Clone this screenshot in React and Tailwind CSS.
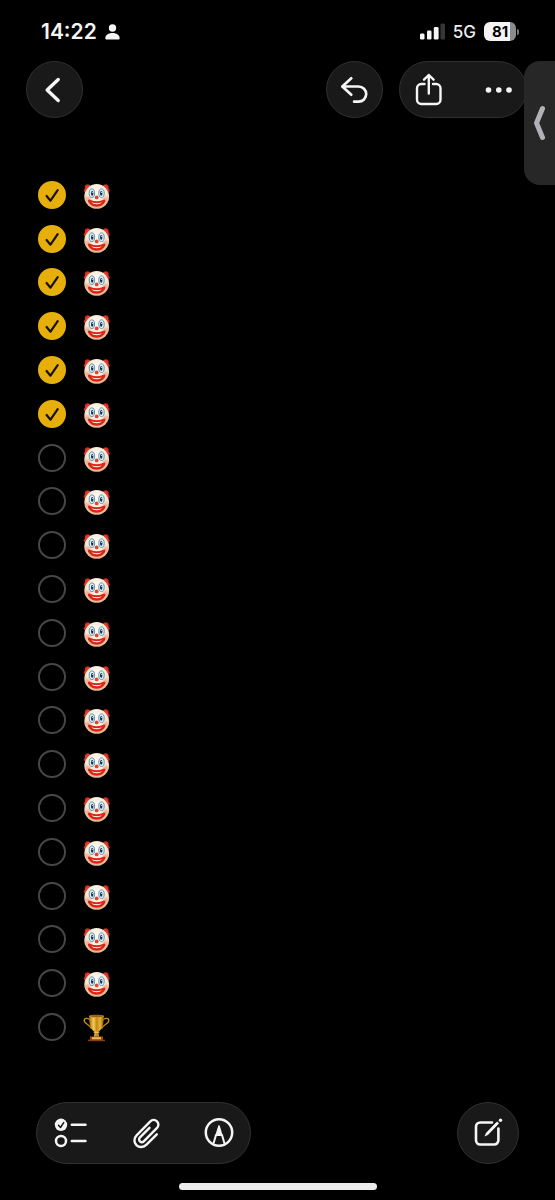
import { useState } from "react";

const initialItems = Array.from({ length: 20 }, (_, index) => ({
  id: index + 1,
  kind: index === 19 ? "trophy" : "clown",
  done: index < 6
}));

const Clown = () => (
  <svg viewBox="0 0 28 28" className="size-7" role="img" aria-label="Clown face">
    <defs>
      <radialGradient id="clown-skin" cx="50%" cy="35%" r="65%">
        <stop offset="0%" stopColor="#fffdf8" />
        <stop offset="60%" stopColor="#f9ead6" />
        <stop offset="100%" stopColor="#deb083" />
      </radialGradient>
      <radialGradient id="clown-cheek">
        <stop offset="0%" stopColor="#f58a70" stopOpacity="0.7" />
        <stop offset="100%" stopColor="#f58a70" stopOpacity="0" />
      </radialGradient>
    </defs>
    <g fill="#c9261a">
      <circle cx="4.6" cy="5" r="2.8" />
      <circle cx="2.7" cy="8.4" r="2" />
      <circle cx="22.8" cy="5" r="2.8" />
      <circle cx="24.7" cy="8.4" r="2" />
    </g>
    <circle cx="13.7" cy="14.4" r="12.4" fill="url(#clown-skin)" />
    <path d="M2.4 9.8c.8-2.8 2.5-4.9 5-6.4L5 3 2 6zM25 9.8c-.8-2.8-2.5-4.9-5-6.4l2.400-.4 3 3z" fill="#e7402d" />
    <circle cx="5" cy="17" r="4" fill="url(#clown-cheek)" />
    <circle cx="22.4" cy="17" r="4" fill="url(#clown-cheek)" />
    <g fill="#e3f1f6" stroke="#5795b5" strokeWidth="1">
      <ellipse cx="8.9" cy="11.2" rx="2.7" ry="4.3" />
      <ellipse cx="18.5" cy="11.2" rx="2.7" ry="4.3" />
    </g>
    <ellipse cx="9.2" cy="11.4" rx="1.2" ry="2.4" fill="#1c3147" />
    <ellipse cx="18.2" cy="11.4" rx="1.2" ry="2.4" fill="#1c3147" />
    <circle cx="9.4" cy="10.4" r="0.5" fill="#fff" />
    <circle cx="18.4" cy="10.4" r="0.5" fill="#fff" />
    <circle cx="13.7" cy="15.4" r="1.9" fill="#e2452f" />
    <path d="M5.3 17.8q1.2-.9 2.3.2 6.1 2.600 12.200 0 1.100-1.100 2.300-.2c.8.8.2 2.400-.8 3.500-3.600 4.700-11.600 4.700-15.200 0-1-1.100-1.600-2.700-.8-3.500z" fill="#dc2418" />
    <path d="M8.400 20.300q5.300 1.800 10.600 0-1.500 2-5.300 2t-5.300-2z" fill="#fff" />
  </svg>
);

const Trophy = () => (
  <svg viewBox="0 0 28 28" className="size-7" role="img" aria-label="Trophy">
    <defs>
      <linearGradient id="trophy-gold" x1="0" x2="1">
        <stop offset="0%" stopColor="#a96f0c" />
        <stop offset="30%" stopColor="#f3cb51" />
        <stop offset="52%" stopColor="#c58612" />
        <stop offset="75%" stopColor="#e9b637" />
        <stop offset="100%" stopColor="#8d5808" />
      </linearGradient>
    </defs>
    <path
      d="M7 6C5.2 3.600 1 3.900 1.200 6.900c.2 2.800 5.200 3.300 7.400 8M20 6c1.800-2.400 6-2.100 5.800.9-.2 2.800-5.200 3.300-7.400 8"
      fill="none"
      stroke="#c48b1c"
      strokeWidth="1.400"
    />
    <path d="M6.2 2h14.600c.1 8-1.500 13.400-5.500 15.800l.8 5.200h-5.200l.8-5.200C7.700 15.400 6.100 10 6.200 2z" fill="url(#trophy-gold)" />
    <ellipse cx="13.5" cy="2.200" rx="7.300" ry="1" fill="#7d510d" stroke="#e1ad36" strokeWidth="0.6" />
    <path d="M10.600 18.200h5.800" stroke="#f4d36b" strokeWidth="1" />
    <path d="M7 22.400h13v3.600H7z" fill="#9a4a14" />
    <path d="M9 23.200h9v2.200H9z" fill="#edbb62" />
    <path d="M5 25.600h17v1.600H5z" fill="#8a3c0e" />
  </svg>
);

const StatusBar = () => (
  <div className="flex h-[61px] items-center justify-between pt-[2px] pr-9 pl-[41px]">
    <div className="flex items-center gap-2">
      <span className="text-[21px] leading-6 font-semibold">14:22</span>
      <svg viewBox="0 0 15 16" className="h-4 w-[15px]" fill="currentColor" aria-hidden="true">
        <circle cx="7.5" cy="4" r="3.7" />
        <path d="M.3 14.200C.3 11 3.400 8.900 7.500 8.900s7.200 2.100 7.200 5.300c0 .9-.5 1.400-1.500 1.400H1.800c-1 0-1.500-.5-1.500-1.400z" />
      </svg>
    </div>
    <div className="flex items-center gap-2">
      <svg viewBox="0 0 25 17" className="h-[17px] w-[25px]" fill="currentColor" aria-hidden="true">
        <rect x="0" y="10.5" width="4.5" height="6" rx="1.3" />
        <rect x="7" y="7.5" width="4.5" height="9" rx="1.3" />
        <rect x="13.8" y="4" width="4.8" height="12.5" rx="1.3" />
        <rect x="20.5" y="0.5" width="4.5" height="16" rx="1.3" fill="#363636" />
      </svg>
      <span className="text-[17px] leading-6 font-medium text-[#eeeeee]">5G</span>
      <div className="flex items-center gap-px">
        <div className="flex h-[19px] w-8 items-center justify-center rounded-md bg-linear-to-r from-[#f4f4f4] from-81% to-[#8b8b8b] to-81% text-[15px] leading-none font-bold text-black">
          81
        </div>
        <div className="h-[6px] w-[2px] rounded-r-full bg-[#777777]" />
      </div>
    </div>
  </div>
);

const glass = "border border-[#303030] bg-[#191919]";

const Header = () => (
  <header className="flex items-center pr-7 pl-[26px]">
    <button aria-label="Back" className={`mr-auto flex size-[57px] items-center justify-center rounded-full ${glass}`}>
      <svg viewBox="0 0 30 30" className="mr-1 size-[30px]" fill="none" stroke="currentColor" strokeWidth="3.4" strokeLinecap="round" strokeLinejoin="round">
        <path d="M20.2 4.500 9.200 15l11 10.500" />
      </svg>
    </button>
    <button aria-label="Undo" className={`mr-4 flex size-[57px] items-center justify-center rounded-full ${glass}`}>
      <svg viewBox="0 0 30 30" className="size-[30px]" fill="none" stroke="currentColor" strokeWidth="2.7" strokeLinecap="round" strokeLinejoin="round">
        <path d="M11.300 3.300 2.300 11.500l9 8.200M3.200 11.500H18.600a7.600 7.600 0 0 1 0 15.200h-4.500" />
      </svg>
    </button>
    <div className={`flex h-[57px] w-32 items-center justify-between rounded-full pr-3 pl-[15px] ${glass}`}>
      <button aria-label="Share">
        <svg viewBox="0 0 28 34" className="h-[34px] w-7" fill="none" stroke="currentColor" strokeWidth="2.4" strokeLinecap="round" strokeLinejoin="round">
          <path d="M9.500 11H6.200A4.200 4.200 0 0 0 2 15.200v11.600A4.200 4.200 0 0 0 6.200 31h15.100a4.200 4.200 0 0 0 4.200-4.200V15.200a4.200 4.200 0 0 0-4.200-4.200H18M13.800 20.500V2M9 6.700 13.800 2l4.800 4.700" />
        </svg>
      </button>
      <button aria-label="More">
        <svg viewBox="0 0 30 30" className="size-[30px]" fill="currentColor">
          <circle cx="4.5" cy="15" r="2.800" />
          <circle cx="14.8" cy="15" r="2.800" />
          <circle cx="25" cy="15" r="2.800" />
        </svg>
      </button>
    </div>
  </header>
);

const ChecklistRow = ({ item, onToggle }) => (
  <li className="flex flex-1 items-center">
    <label className="flex items-center gap-[17px]">
      <span className="grid size-7 place-items-center">
        <input
          type="checkbox"
          checked={item.done}
          onChange={() => onToggle(item.id)}
          className="col-start-1 row-start-1 size-7 appearance-none rounded-full border-2 border-[#474749] checked:border-[#e6af0c] checked:bg-[#e6af0c]"
        />
        {item.done && (
          <svg viewBox="0 0 28 28" className="pointer-events-none col-start-1 row-start-1 size-7" fill="none" stroke="#171204" strokeWidth="2.2" strokeLinecap="round" strokeLinejoin="round">
            <path d="m8.600 15 3.900 4.700 7.200-10.500" />
          </svg>
        )}
      </span>
      <span className="pt-[2px]">{item.kind === "trophy" ? <Trophy /> : <Clown />}</span>
    </label>
  </li>
);

const Footer = () => (
  <footer className="mt-[53px] flex items-center justify-between px-9">
    <div className={`flex h-[62px] w-[215px] items-center justify-between rounded-full pr-4 pl-[17px] ${glass}`}>
      <button aria-label="Checklist">
        <svg viewBox="0 0 34 30" className="h-[30px] w-[34px]" fill="none" stroke="currentColor" strokeWidth="2.5" strokeLinecap="round" strokeLinejoin="round">
          <circle cx="7" cy="6.800" r="6.200" fill="currentColor" stroke="none" />
          <path d="m4.500 7.200 2 2.300 3.200-4.900" stroke="#191919" strokeWidth="1.500" />
          <circle cx="7" cy="23" r="5" />
          <path d="M17.800 6.800H31.500M17.800 23h13.700" />
        </svg>
      </button>
      <button aria-label="Attach">
        <svg viewBox="0 0 28 32" className="h-8 w-7" fill="none" stroke="currentColor" strokeWidth="2.4" strokeLinecap="round" strokeLinejoin="round">
          <path d="M24.800 17.300 14.500 27.600c-3 3-7.300 3.200-10.100.5s-2.600-7 .4-10L18.100 4.600c2-2 4.900-2.200 6.900-.3s1.800 4.900-.2 6.900L12 24.100c-1.200 1.200-2.900 1.300-4.100.2s-1-2.900.1-4l9.500-9.500" />
        </svg>
      </button>
      <button aria-label="Markup">
        <svg viewBox="0 0 30 30" className="size-[30px]" fill="none" stroke="currentColor" strokeLinejoin="round">
          <circle cx="15" cy="14.500" r="13.200" strokeWidth="2.500" />
          <path d="M9.200 26.500 12 17h6l2.800 9.500" strokeWidth="2" />
          <path d="M14.200 8q.8-1.800 1.600 0l3.100 10h-7.800z" fill="currentColor" stroke="none" />
        </svg>
      </button>
    </div>
    <button aria-label="New note" className={`flex size-[62px] items-center justify-center rounded-full ${glass}`}>
      <svg viewBox="0 0 30 30" className="size-[30px]" fill="none" stroke="currentColor" strokeWidth="2.6" strokeLinecap="round" strokeLinejoin="round">
        <path d="M19 4.500H7.200A4.200 4.200 0 0 0 3 8.700v13.600a4.200 4.200 0 0 0 4.200 4.200h14a4.200 4.200 0 0 0 4.200-4.200V10.500" />
        <path d="m24.200 3.500 1.800 1.800-11.600 12-2.900 1.300 1.300-3.100z" fill="currentColor" stroke="none" />
        <path d="M24.200 5.300 14 15.800" strokeWidth="2.600" strokeLinecap="butt" />
        <circle cx="27.500" cy="2.200" r="1.700" fill="currentColor" stroke="none" />
      </svg>
    </button>
  </footer>
);

const App = () => {
  const [items, setItems] = useState(initialItems);

  const toggleItem = (id) => {
    setItems(items.map((item) => (item.id === id ? { ...item, done: !item.done } : item)));
  };

  return (
    <div className="relative flex min-h-screen flex-col overflow-hidden bg-black font-['Inter',sans-serif] text-[#f5f5f5]">
      <StatusBar />
      <Header />
      <main className="mt-[55px] flex flex-1 flex-col">
        <ul className="flex flex-1 flex-col pl-[38px]">
          {items.map((item) => (
            <ChecklistRow key={item.id} item={item} onToggle={toggleItem} />
          ))}
        </ul>
      </main>
      <Footer />
      <div className="mx-auto mt-[19px] mb-[10px] h-[7px] w-[198px] rounded-full bg-[#ececec]" />
      <button aria-label="Show video" className="absolute top-[61px] right-0 flex h-[124px] w-[31px] items-center justify-center rounded-l-2xl bg-[#272727]">
        <svg viewBox="0 0 16 38" className="h-[38px] w-4" fill="none" stroke="#b2b2b6" strokeWidth="5" strokeLinecap="round" strokeLinejoin="round">
          <path d="M10.500 4.500 4.500 19l6 14.500" />
        </svg>
      </button>
    </div>
  );
};

export default App;
